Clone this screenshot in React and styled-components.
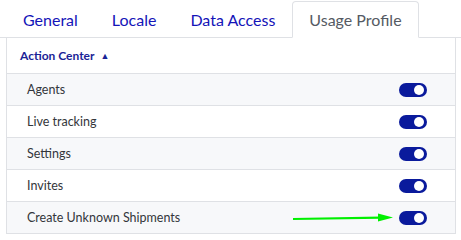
import React, { useState } from 'react'
import styled, { createGlobalStyle } from 'styled-components'

const GlobalStyle = createGlobalStyle`
  html, body {
    margin: 0;
    padding: 0;
    background: #fff;
  }
  body {
    font-family: Lato, 'Noto Sans', sans-serif;
  }
`

const tabs = ['General', 'Locale', 'Data Access', 'Usage Profile']
const features = ['Agents', 'Live tracking', 'Settings', 'Invites', 'Create Unknown Shipments']

export default function App () {
  const [active, setActive] = useState('Usage Profile')
  const [enabled, setEnabled] = useState(() => features.map(() => true))

  const toggle = (i) => {
    setEnabled(prev => prev.map((v, j) => (j === i ? !v : v)))
  }

  return (
    <>
      <GlobalStyle />
      <Page>
        <TabBar>
          {tabs.map(t => (
            <Tab key={t} $active={t === active} onClick={() => setActive(t)}>
              {t}
            </Tab>
          ))}
        </TabBar>
        <Panel>
          <SectionHeader>
            Action Center <Caret>▲</Caret>
          </SectionHeader>
          {features.map((f, i) => (
            <Row key={f} $shaded={i % 2 === 0}>
              <Label>{f}</Label>
              <RowEnd>
                {i === features.length - 1 && <Pointer />}
                <Switch $on={enabled[i]} onClick={() => toggle(i)} />
              </RowEnd>
            </Row>
          ))}
        </Panel>
      </Page>
    </>
  )
}

const Pointer = () => (
  <Arrow width='100' height='10' viewBox='0 0 100 10'>
    <line x1='0' y1='6' x2='88' y2='4.6' stroke='#00f000' strokeWidth='2.2' />
    <polygon points='85,0.6 100,4.4 85,8.4' fill='#00f000' />
  </Arrow>
)

const Page = styled.div`
  width: 461px;
  height: 239px;
  overflow: hidden;
`
const TabBar = styled.div`
  display: flex;
  align-items: flex-end;
  height: 38px;
  padding-left: 6px;
  border-bottom: 1px solid #dfe1e5;
  box-sizing: border-box;
`
const Tab = styled.button`
  height: ${p => (p.$active ? '37px' : '36px')};
  margin: 0 0 ${p => (p.$active ? '-1px' : '0')};
  padding: 0 16px;
  border: 1px solid ${p => (p.$active ? '#dfe1e5' : 'transparent')};
  border-bottom-color: ${p => (p.$active ? '#fff' : 'transparent')};
  border-radius: 4px 4px 0 0;
  background: #fff;
  font-family: Lato, 'Noto Sans', sans-serif;
  font-size: 16px;
  color: ${p => (p.$active ? '#555a63' : '#1414b8')};
  cursor: pointer;
  box-sizing: border-box;
`
const Panel = styled.div`
  margin: 0 5px 0 6px;
  border-left: 1px solid #dfe1e5;
  border-right: 1px solid #dfe1e5;
`
const SectionHeader = styled.div`
  display: flex;
  align-items: center;
  height: 36px;
  padding-left: 13px;
  border-bottom: 1px solid #dfe1e5;
  box-sizing: border-box;
  font-size: 12px;
  font-weight: 700;
  color: #1a2396;
`
const Caret = styled.span`
  margin-left: 6px;
  font-size: 9px;
`
const Row = styled.div`
  display: flex;
  align-items: center;
  justify-content: space-between;
  height: 32px;
  padding: 0 28px 0 20px;
  border-bottom: 1px solid #dfe1e5;
  box-sizing: border-box;
  background: ${p => (p.$shaded ? '#f7f8fa' : '#fff')};
`
const Label = styled.span`
  font-size: 12.5px;
  color: #33363b;
`
const RowEnd = styled.div`
  display: flex;
  align-items: center;
  gap: 6px;
`
const Arrow = styled.svg`
  display: block;
`
const Switch = styled.button`
  position: relative;
  width: 28px;
  height: 14px;
  padding: 0;
  border: none;
  border-radius: 7px;
  background: ${p => (p.$on ? '#0a1a9c' : '#c4c7cc')};
  cursor: pointer;
  &::after {
    content: '';
    position: absolute;
    top: 2px;
    left: ${p => (p.$on ? '15px' : '3px')};
    width: 10px;
    height: 10px;
    border-radius: 50%;
    background: #fff;
  }
`
